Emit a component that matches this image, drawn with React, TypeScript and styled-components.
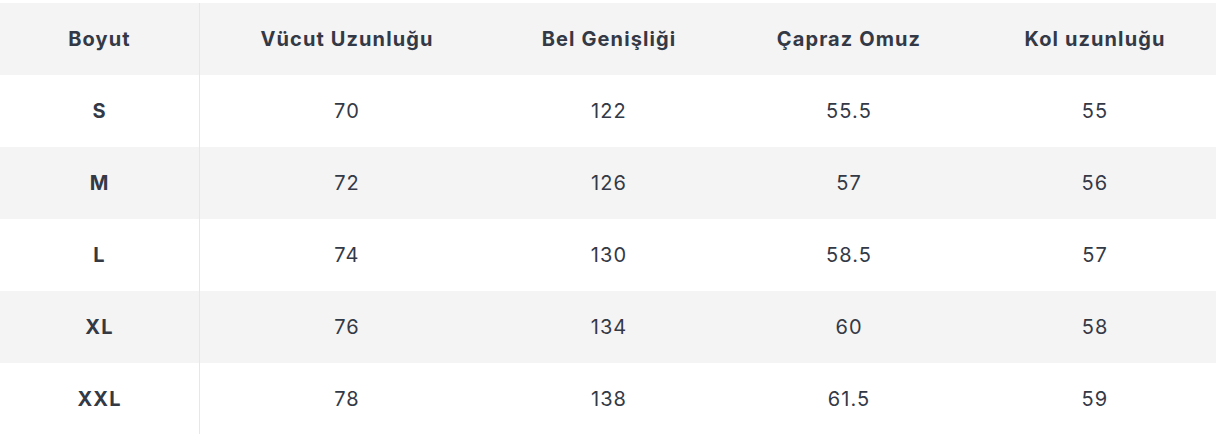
import React from "react";
import styled, { createGlobalStyle } from "styled-components";

const Global = createGlobalStyle`
  html, body { margin: 0; padding: 0; background: #ffffff; }
  body { font-family: Inter, "Noto Sans", "Liberation Sans", sans-serif; }
`;

const Wrapper = styled.div`
  width: 1216px;
  padding-top: 3px;
`;

const Table = styled.div`
  display: grid;
  grid-template-columns: 200px 294px 230px 250px 242px;
`;

const Row = styled.div<{ $shade: boolean }>`
  display: contents;
  & > div {
    background: ${(p) => (p.$shade ? "#f4f4f4" : "#ffffff")};
    height: 72px;
  }
`;

const Cell = styled.div<{ $bold?: boolean; $first?: boolean }>`
  display: flex;
  align-items: center;
  justify-content: center;
  font-size: 20px;
  letter-spacing: 1.1px;
  font-weight: ${(p) => (p.$bold ? 700 : 400)};
  color: #343946;
  border-right: ${(p) => (p.$first ? "1px solid #e7e7e7" : "none")};
  box-sizing: border-box;
`;

const headers = ["Boyut", "Vücut Uzunluğu", "Bel Genişliği", "Çapraz Omuz", "Kol uzunluğu"];
const rows: string[][] = [
  ["S", "70", "122", "55.5", "55"],
  ["M", "72", "126", "57", "56"],
  ["L", "74", "130", "58.5", "57"],
  ["XL", "76", "134", "60", "58"],
  ["XXL", "78", "138", "61.5", "59"],
];

export default function App() {
  return (
    <>
      <Global />
      <Wrapper>
        <Table>
          <Row $shade>
            {headers.map((h, i) => (
              <Cell key={h} $bold $first={i === 0}>
                {h}
              </Cell>
            ))}
          </Row>
          {rows.map((r, ri) => (
            <Row key={r[0]} $shade={ri % 2 === 1}>
              {r.map((v, i) => (
                <Cell key={i} $bold={i === 0} $first={i === 0}>
                  {v}
                </Cell>
              ))}
            </Row>
          ))}
        </Table>
      </Wrapper>
    </>
  );
}
